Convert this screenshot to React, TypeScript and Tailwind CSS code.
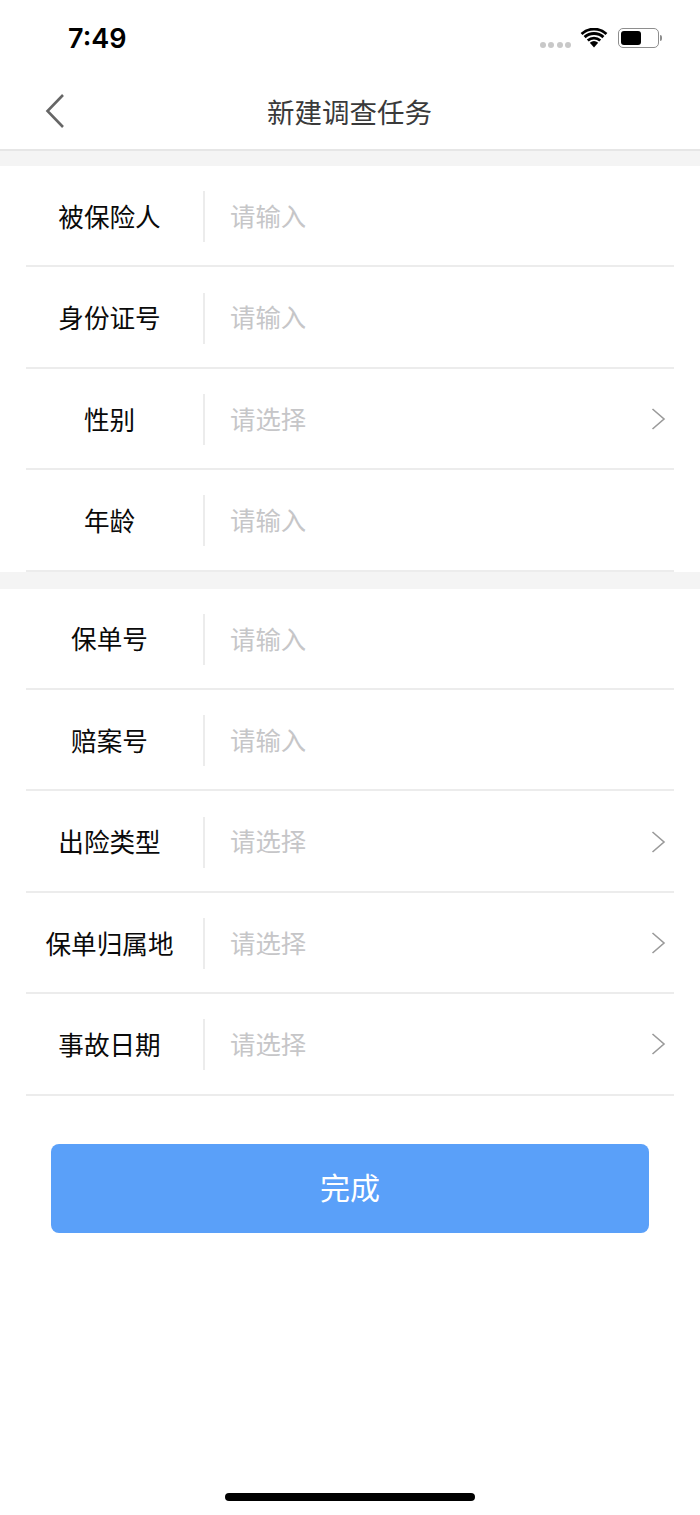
const cjk = "font-['Noto_Sans_CJK_SC','Liberation_Sans',sans-serif]";

type R = { label: string; hint: string; arrow?: boolean };
const first: R[] = [
  { label: "被保险人", hint: "请输入" },
  { label: "身份证号", hint: "请输入" },
  { label: "性别", hint: "请选择", arrow: true },
  { label: "年龄", hint: "请输入" },
];
const second: R[] = [
  { label: "保单号", hint: "请输入" },
  { label: "赔案号", hint: "请输入" },
  { label: "出险类型", hint: "请选择", arrow: true },
  { label: "保单归属地", hint: "请选择", arrow: true },
  { label: "事故日期", hint: "请选择", arrow: true },
];

function Row({ label, hint, arrow }: R) {
  return (
    <div className="ml-[26px] mr-[26px] h-[101.4px] border-b-2 border-[#ececec] flex items-center">
      <div className="w-[167px] text-center text-[25.6px] text-[#0a0a0a] leading-none whitespace-nowrap">{label}</div>
      <div className="ml-[10px] mt-[2px] w-[2px] h-[51px] bg-[#ececec]" />
      <div className="ml-[25px] flex-1 text-[25.4px] text-[#c6c6c8] leading-none">{hint}</div>
      {arrow && (
        <svg width="15" height="24" viewBox="0 0 15 24" className="mr-[8px] mt-[1px]" fill="none">
          <path d="M1.5 2 L13 12 L1.5 22" stroke="#9a9a9a" strokeWidth="1.6" />
        </svg>
      )}
    </div>
  );
}

export default function App() {
  return (
    <div className={`w-[700px] h-[1515px] bg-white flex flex-col overflow-hidden ${cjk}`}>
      <div className="h-[75px] flex items-start justify-between pl-[68px] pr-[38px] pt-[22px]">
        <span className="font-['Inter','Liberation_Sans',sans-serif] text-[27px] font-semibold text-black leading-[34px]">7:49</span>
        <div className="flex items-center mt-[3px] h-[26px]">
          <div className="flex gap-[2.5px] mt-[14px] mr-[9px]">
            <span className="w-[6px] h-[6px] rounded-full bg-[#c8c8c8]" />
            <span className="w-[6px] h-[6px] rounded-full bg-[#c8c8c8]" />
            <span className="w-[6px] h-[6px] rounded-full bg-[#c8c8c8]" />
            <span className="w-[6px] h-[6px] rounded-full bg-[#c8c8c8]" />
          </div>
          <svg width="28" height="20" viewBox="0 0 28 20" className="mr-[10px]">
            <path d="M14 19.5 L9.8 14.8 A6.5 6.5 0 0 1 18.2 14.8 Z" fill="#000" />
            <path d="M6.8 11.6 A10.8 10.8 0 0 1 21.2 11.6 L19.3 13.6 A8 8 0 0 0 8.7 13.6 Z" fill="#000" />
            <path d="M3.6 8.1 A15.4 15.4 0 0 1 24.4 8.1 L22.4 10.2 A12.4 12.4 0 0 0 5.6 10.2 Z" fill="#000" />
            <path d="M0.6 4.9 A19.8 19.8 0 0 1 27.4 4.9 L25.5 7 A17 17 0 0 0 2.5 7 Z" fill="#000" />
          </svg>
          <div className="w-[41px] h-[20px] rounded-[5px] border-[1.5px] border-[#8e8e8e] p-[2px] flex">
            <div className="w-[20px] h-full rounded-[3px] bg-black" />
          </div>
          <div className="w-[2px] h-[6px] ml-[1px] rounded-r-full bg-[#8e8e8e]" />
        </div>
      </div>

      <div className="h-[76px] relative flex items-center justify-center border-b-2 border-[#e6e6e6]">
        <svg width="20" height="36" viewBox="0 0 20 36" fill="none" className="absolute left-[45px] top-[18px]">
          <path d="M18 2 L2.5 18 L18 34" stroke="#666666" strokeWidth="2.6" />
        </svg>
        <span className="text-[27.5px] text-[#3a3a3a] leading-none mr-[1px]">新建调查任务</span>
      </div>

      <div className="h-[15px] bg-[#f4f4f4]" />
      {first.map((r) => <Row key={r.label} {...r} />)}
      <div className="h-[17px] bg-[#f4f4f4]" />
      {second.map((r) => <Row key={r.label} {...r} />)}

      <div className="mt-[48.4px] mx-[51px] h-[89px] pb-[4px] rounded-[8px] bg-[#5aa0f9] flex items-center justify-center text-white text-[30px] leading-none">
        完成
      </div>

      <div className="mt-auto mb-[14px] mx-auto w-[250px] h-[8px] rounded-full bg-black" />
    </div>
  );
}
